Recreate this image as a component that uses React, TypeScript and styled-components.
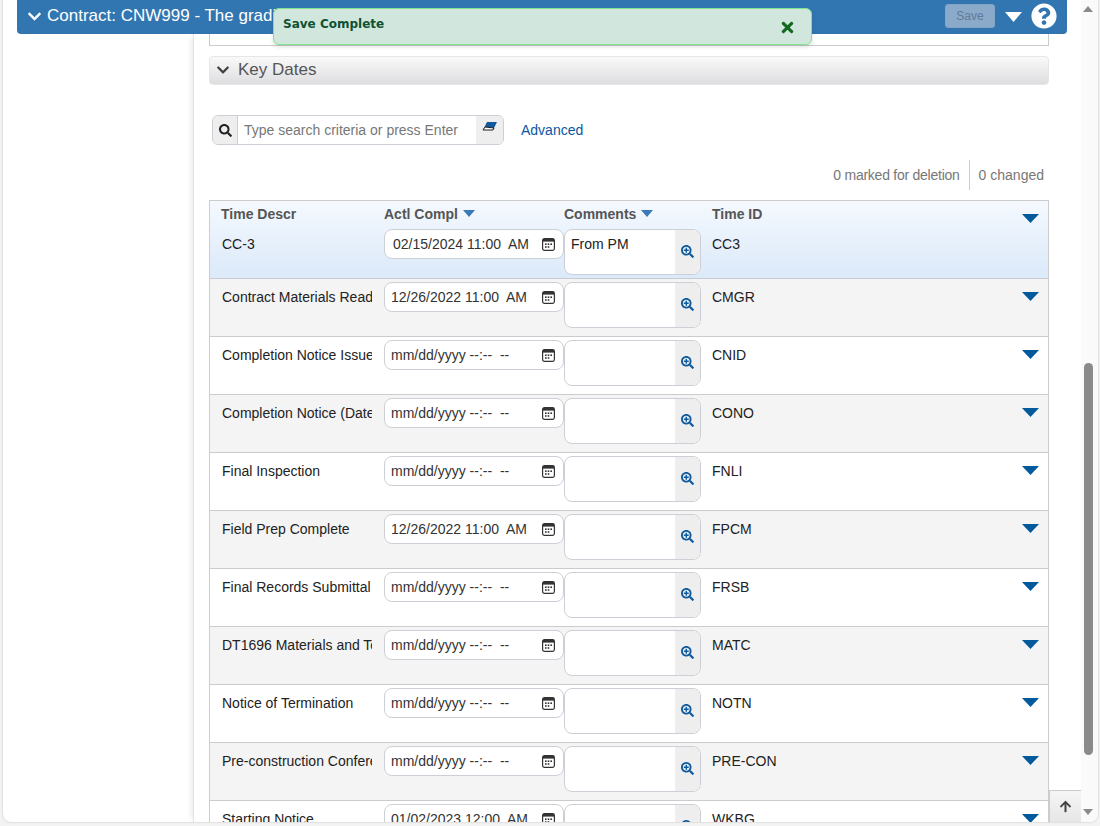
import React from 'react'
import styled, { createGlobalStyle, css } from 'styled-components'
import { FaChevronDown, FaQuestionCircle, FaSearch, FaSearchPlus, FaArrowUp, FaTimes } from 'react-icons/fa'

const GlobalStyle = createGlobalStyle`
  html, body {
    margin: 0;
    height: 826px;
    overflow: hidden;
    background: #f3f3f3;
  }
  * {
    box-sizing: border-box;
  }
  body {
    font-family: "Liberation Sans", Arial, sans-serif;
    font-size: 14px;
    color: #222;
  }
`

const Frame = styled.div`
  position: relative;
  display: flex;
  height: 822px;
  margin-left: 3px;
  margin-right: 2px;
  background: #fff;
  border-radius: 0 0 8px 8px;
  overflow: hidden;
  box-shadow: 0 0 2px rgba(0, 0, 0, 0.25);
`

const Workspace = styled.div`
  flex: 1;
  min-width: 0;
  display: flex;
  flex-direction: column;
`

const TitleBar = styled.div`
  flex: none;
  display: flex;
  align-items: center;
  height: 34px;
  margin: 0 14px;
  padding: 0 10px 2px 10px;
  background: #3276b1;
  border-radius: 0 0 4px 4px;
  color: #fff;
`

const TitleChevron = styled(FaChevronDown)`
  width: 15px;
  height: 15px;
  margin-right: 5px;
`

const TitleText = styled.div`
  flex: 1;
  font-size: 17px;
  white-space: nowrap;
`

const SaveButton = styled.button`
  width: 50px;
  height: 24px;
  margin-right: 10px;
  padding: 0;
  background: #8ba9c9;
  border: 1px solid #86a4c5;
  border-radius: 3px;
  color: #5f7b9b;
  font-family: inherit;
  font-size: 12px;
`

const MenuCaret = styled.svg`
  width: 17px;
  height: 10px;
  margin-right: 9px;
  margin-top: 2px;
`

const HelpIcon = styled(FaQuestionCircle)`
  width: 26px;
  height: 26px;
`

const Columns = styled.div`
  flex: 1;
  min-height: 0;
  display: flex;
`

const Sidebar = styled.div`
  flex: none;
  width: 190px;
`

const Main = styled.div`
  flex: 1;
  min-width: 0;
  padding: 0 32px 0 15px;
  border-left: 1px solid #e2e2e2;
  box-shadow: -4px 0 6px -3px rgba(0, 0, 0, 0.1);
  overflow: hidden;
`

const PriorPanel = styled.div`
  height: 12px;
  margin-bottom: 10px;
  border: 1px solid #ccc;
  border-top: 0;
`

const SectionBar = styled.div`
  display: flex;
  align-items: center;
  height: 29px;
  padding: 0 0 2px 6px;
  background: linear-gradient(#f9f9f9, #dedee1);
  border: 1px solid #e6e6e6;
  border-radius: 4px;
  color: #555;
  font-size: 17px;
`

const SectionChevron = styled(FaChevronDown)`
  width: 14px;
  height: 14px;
  margin-right: 8px;
  color: #3f3f3f;
`

const SearchRow = styled.div`
  display: flex;
  align-items: center;
  margin: 30px 0 0 3px;
`

const SearchGroup = styled.div`
  display: flex;
  width: 292px;
  height: 30px;
  border: 1px solid #ccd0d6;
  border-radius: 6px;
  overflow: hidden;
  background: #fff;
`

const SearchAddon = styled.div<{ $width: number }>`
  flex: none;
  display: flex;
  align-items: center;
  justify-content: center;
  width: ${(p) => p.$width}px;
  background: #eee;
`

const SearchIcon = styled(FaSearch)`
  width: 13px;
  height: 13px;
  color: #222;
`

const SearchField = styled.div`
  flex: 1;
  display: flex;
  align-items: center;
  padding-left: 6px;
  border-left: 1px solid #ccd0d6;
  color: #777;
`

const EraserIcon = styled.svg`
  width: 16px;
  height: 12px;
  margin-top: -7px;
`

const AdvancedLink = styled.a`
  margin-left: 17px;
  color: #0a58a6;
`

const Counters = styled.div`
  display: flex;
  justify-content: flex-end;
  align-items: center;
  height: 30px;
  margin-top: 15px;
  padding-right: 5px;
  color: #777;
`

const DeletionCount = styled.span`
  letter-spacing: -0.25px;
`

const CounterDivider = styled.div`
  width: 1px;
  height: 30px;
  margin: 0 9px;
  background: #ccc;
`

const Table = styled.div`
  margin-top: 10px;
  border: 1px solid #ccc;
  border-bottom: 0;
`

const SelectedBlock = styled.div`
  background: linear-gradient(#f5f9fe, #dbe9f9);
  border-bottom: 1px solid #c8ccd2;
`

const rowGrid = css`
  display: grid;
  grid-template-columns: 174px 180px 137px 1fr;
`

const HeadRow = styled.div`
  ${rowGrid}
  height: 28px;
  padding-bottom: 2px;
  align-items: center;
  color: #555;
  font-weight: bold;
`

const HeadCell = styled.div<{ $inset?: number }>`
  display: flex;
  align-items: center;
  padding-left: ${(p) => p.$inset ?? 0}px;
  white-space: nowrap;
`

const SortCaret = styled.svg`
  width: 12px;
  height: 7px;
  margin-left: 5px;
  margin-top: -2px;
`

const EndCell = styled.div`
  display: flex;
  justify-content: space-between;
  padding: 0 9px 0 11px;
`

const RowCaret = styled.svg<{ $top: number }>`
  width: 17px;
  height: 9px;
  margin-top: ${(p) => p.$top}px;
`

const DataRow = styled.div<{ $tone: 'selected' | 'white' | 'grey' }>`
  ${rowGrid}
  height: ${(p) => (p.$tone === 'selected' ? 49 : 58)}px;
  padding-top: ${(p) => (p.$tone === 'selected' ? 0 : 3)}px;
  background: ${(p) => (p.$tone === 'grey' ? '#f4f4f4' : p.$tone === 'white' ? '#fff' : 'transparent')};
  border-bottom: ${(p) => (p.$tone === 'selected' ? '0' : '1px solid #ccc')};
`

const DescrCell = styled.div`
  height: 31px;
  line-height: 31px;
  margin-left: 12px;
  width: 150px;
  overflow: hidden;
  white-space: nowrap;
`

const DateField = styled.div<{ $inset: number }>`
  display: flex;
  align-items: center;
  justify-content: space-between;
  height: 30px;
  padding: 0 8px 0 ${(p) => p.$inset}px;
  background: #fff;
  border: 1px solid #ccd0d6;
  border-radius: 8px;
  color: #333;
  white-space: pre;
`

const CalendarIcon = styled.svg`
  flex: none;
  width: 13px;
  height: 13px;
`

const CommentGroup = styled.div`
  display: flex;
  height: 46px;
  background: #fff;
  border: 1px solid #ccd0d6;
  border-radius: 8px;
  overflow: hidden;
`

const CommentText = styled.div`
  flex: 1;
  padding: 6px 6px 0;
`

const ZoomAddon = styled.div`
  flex: none;
  display: flex;
  align-items: center;
  justify-content: center;
  width: 25px;
  padding-bottom: 1px;
  background: #eee;
`

const ZoomIcon = styled(FaSearchPlus)`
  width: 13px;
  height: 13px;
  color: #0f5a9c;
`

const IdText = styled.div`
  line-height: 31px;
`

const Toast = styled.div`
  position: absolute;
  top: 8px;
  left: 270px;
  display: flex;
  justify-content: space-between;
  width: 539px;
  height: 37px;
  padding: 8px 15px 0 9px;
  background: #d1e7dd;
  border: 1px solid #7fe58c;
  border-radius: 6px;
  box-shadow: 0 2px 4px rgba(0, 0, 0, 0.12);
  color: #0f5132;
  font-family: "DejaVu Sans", sans-serif;
  font-size: 12px;
  font-weight: 700;
`

const CloseIcon = styled(FaTimes)`
  width: 17px;
  height: 17px;
  margin-top: 2px;
  color: #12691f;
`

const BackToTop = styled.div`
  position: absolute;
  right: 17px;
  bottom: 0;
  display: flex;
  align-items: center;
  justify-content: center;
  width: 32px;
  height: 32px;
  background: linear-gradient(#f5f5f5, #e6e6e6);
  border: 1px solid #ccc;
  border-bottom: 0;
  border-right: 0;
  color: #444;
`

const BackIcon = styled(FaArrowUp)`
  width: 13px;
  height: 13px;
`

const ScrollTrack = styled.div`
  flex: none;
  position: relative;
  width: 17px;
  background: #fafafa;
`

const ScrollThumb = styled.div`
  position: absolute;
  top: 363px;
  left: 3px;
  width: 9px;
  height: 392px;
  background: #8a8a8a;
  border-radius: 5px;
`

const ScrollArrow = styled.div<{ $dir: 'up' | 'down' }>`
  position: absolute;
  left: 2px;
  width: 0;
  height: 0;
  border-left: 5px solid transparent;
  border-right: 5px solid transparent;
  ${(p) =>
    p.$dir === 'up'
      ? css`
          top: 6px;
          border-bottom: 6px solid #8a8a8a;
        `
      : css`
          bottom: 7px;
          border-top: 6px solid #8a8a8a;
        `}
`

const Triangle: React.FC<{ fill: string }> = ({ fill }) => <polygon points="0,0 17,0 8.5,9" fill={fill} />

const Calendar = () => (
  <CalendarIcon viewBox="0 0 13 13">
    <rect x="0.6" y="0.6" width="11.8" height="11.8" rx="1.8" fill="none" stroke="#333" strokeWidth="1.2" />
    <rect x="1" y="1" width="11" height="2.6" fill="#333" />
    <g fill="#333">
      <rect x="3" y="5.4" width="1.6" height="1.6" />
      <rect x="5.7" y="5.4" width="1.6" height="1.6" />
      <rect x="8.4" y="5.4" width="1.6" height="1.6" />
      <rect x="3" y="8.2" width="1.6" height="1.6" />
      <rect x="5.7" y="8.2" width="1.6" height="1.6" />
    </g>
  </CalendarIcon>
)

const Comment: React.FC<{ text?: string }> = ({ text }) => (
  <CommentGroup>
    <CommentText>{text}</CommentText>
    <ZoomAddon>
      <ZoomIcon />
    </ZoomAddon>
  </CommentGroup>
)

const EMPTY_DATE = 'mm/dd/yyyy --:--  --'

const rows = [
  { descr: 'Contract Materials Ready', date: '12/26/2022 11:00  AM', id: 'CMGR' },
  { descr: 'Completion Notice Issued', date: EMPTY_DATE, id: 'CNID' },
  { descr: 'Completion Notice (Date', date: EMPTY_DATE, id: 'CONO' },
  { descr: 'Final Inspection', date: EMPTY_DATE, id: 'FNLI' },
  { descr: 'Field Prep Complete', date: '12/26/2022 11:00  AM', id: 'FPCM' },
  { descr: 'Final Records Submittal', date: EMPTY_DATE, id: 'FRSB' },
  { descr: 'DT1696 Materials and Tests', date: EMPTY_DATE, id: 'MATC' },
  { descr: 'Notice of Termination', date: EMPTY_DATE, id: 'NOTN' },
  { descr: 'Pre-construction Conference', date: EMPTY_DATE, id: 'PRE-CON' },
  { descr: 'Starting Notice', date: '01/02/2023 12:00  AM', id: 'WKBG' },
]

export default function App() {
  return (
    <>
      <GlobalStyle />
      <Frame>
        <Workspace>
          <TitleBar>
            <TitleChevron />
            <TitleText>Contract: CNW999 - The gradi</TitleText>
            <SaveButton>Save</SaveButton>
            <MenuCaret viewBox="0 0 17 10">
              <polygon points="0,0 17,0 8.5,10" fill="#fff" />
            </MenuCaret>
            <HelpIcon />
          </TitleBar>
          <Columns>
            <Sidebar />
            <Main>
              <PriorPanel />
              <SectionBar>
                <SectionChevron />
                Key Dates
              </SectionBar>
              <SearchRow>
                <SearchGroup>
                  <SearchAddon $width={24}>
                    <SearchIcon />
                  </SearchAddon>
                  <SearchField>Type search criteria or press Enter</SearchField>
                  <SearchAddon $width={27}>
                    <EraserIcon viewBox="0 0 16 12">
                      <polygon points="5,1 15,1 11,9 1,9" fill="#0f5a9c" />
                      <polygon points="1,9 11,9 12,7 3,6" fill="#fff" stroke="#222" strokeWidth="1" />
                    </EraserIcon>
                  </SearchAddon>
                </SearchGroup>
                <AdvancedLink>Advanced</AdvancedLink>
              </SearchRow>
              <Counters>
                <DeletionCount>0 marked for deletion</DeletionCount>
                <CounterDivider />0 changed
              </Counters>
              <Table>
                <SelectedBlock>
                  <HeadRow>
                    <HeadCell $inset={11}>Time Descr</HeadCell>
                    <HeadCell>
                      Actl Compl
                      <SortCaret viewBox="0 0 12 7">
                        <polygon points="0,0 12,0 6,7" fill="#3a7ab8" />
                      </SortCaret>
                    </HeadCell>
                    <HeadCell>
                      Comments
                      <SortCaret viewBox="0 0 12 7">
                        <polygon points="0,0 12,0 6,7" fill="#3a7ab8" />
                      </SortCaret>
                    </HeadCell>
                    <EndCell>
                      Time ID
                      <RowCaret $top={8} viewBox="0 0 17 9">
                        <Triangle fill="#005a9c" />
                      </RowCaret>
                    </EndCell>
                  </HeadRow>
                  <DataRow $tone="selected">
                    <DescrCell>CC-3</DescrCell>
                    <DateField $inset={8}>
                      <span>02/15/2024 11:00  AM</span>
                      <Calendar />
                    </DateField>
                    <Comment text="From PM" />
                    <EndCell>
                      <IdText>CC3</IdText>
                    </EndCell>
                  </DataRow>
                </SelectedBlock>
                {rows.map((row, i) => (
                  <DataRow key={row.id} $tone={i % 2 === 0 ? 'grey' : 'white'}>
                    <DescrCell>{row.descr}</DescrCell>
                    <DateField $inset={6}>
                      <span>{row.date}</span>
                      <Calendar />
                    </DateField>
                    <Comment />
                    <EndCell>
                      <IdText>{row.id}</IdText>
                      <RowCaret $top={10} viewBox="0 0 17 9">
                        <Triangle fill="#005a9c" />
                      </RowCaret>
                    </EndCell>
                  </DataRow>
                ))}
              </Table>
            </Main>
          </Columns>
        </Workspace>
        <ScrollTrack>
          <ScrollArrow $dir="up" />
          <ScrollThumb />
          <ScrollArrow $dir="down" />
        </ScrollTrack>
        <Toast>
          Save Complete
          <CloseIcon />
        </Toast>
        <BackToTop>
          <BackIcon />
        </BackToTop>
      </Frame>
    </>
  )
}
